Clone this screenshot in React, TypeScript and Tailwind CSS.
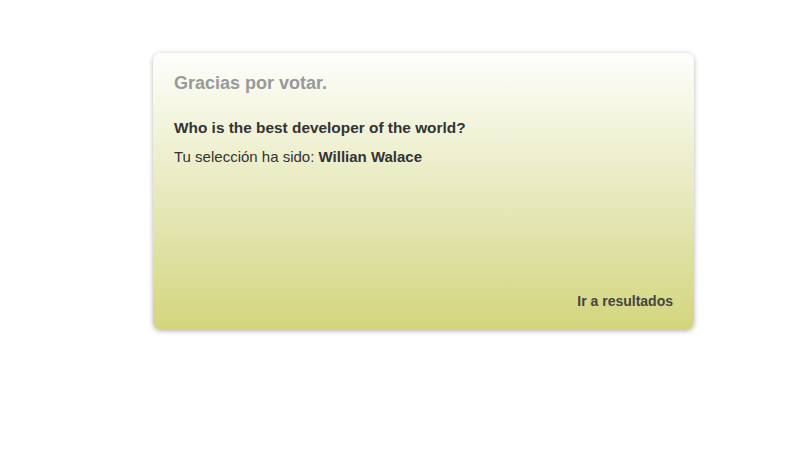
import React from 'react';

const App: React.FC = () => {
  return (
    <div className="w-[800px] h-[461px] bg-white font-['Liberation_Sans',Arial,sans-serif]">
      <div className="pt-[53px] pl-[153px]">
        <div className="w-[541px] h-[277px] rounded-lg bg-gradient-to-b from-[#fefefc] to-[#d3d57c] shadow-[0_1px_5px_rgba(0,0,0,0.3)] px-[21px] pt-[19px] pb-[20px] flex flex-col">
          <h1 className="text-[18px] leading-[22px] font-bold text-[#999999]">Gracias por votar.</h1>
          <p className="mt-[25px] text-[15.4px] leading-[18px] font-bold text-[#333333]">
            Who is the best developer of the world?
          </p>
          <p className="mt-[11px] text-[15px] leading-[18px] text-[#333333]">
            Tu selección ha sido: <span className="font-bold">Willian Walace</span>
          </p>
          <div className="mt-auto flex justify-end">
            <a href="#" className="text-[14px] leading-[18px] font-bold text-[#444444]">
              Ir a resultados
            </a>
          </div>
        </div>
      </div>
    </div>
  );
};

export default App;
